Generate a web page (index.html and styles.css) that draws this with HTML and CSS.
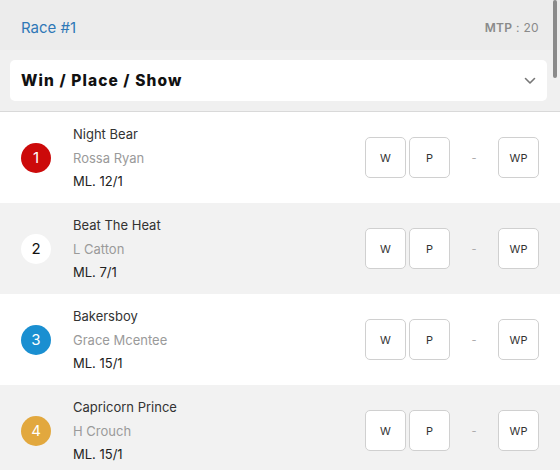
FILE: index.html
```html
<!DOCTYPE html>
<html lang="en">
<head>
    <meta charset="UTF-8">
    <meta name="viewport" content="width=device-width, initial-scale=1.0">
    <title>Race #1</title>
    <link rel="stylesheet" href="styles.css">
</head>
<body>
    <!-- Race header -->
    <div class="race-header">
        <span class="race-title">Race #1</span>
        <span class="mtp"><b>MTP</b> : 20</span>
    </div>

    <!-- Bet type dropdown -->
    <div class="bet-wrap">
        <div class="bet-select">
            <span>Win / Place / Show</span>
            <svg class="chevron" width="12" height="8" viewBox="0 0 12 8">
                <path d="M1.5 1.5 L6 6 L10.5 1.5" fill="none" stroke="#777" stroke-width="1.6" stroke-linecap="round" stroke-linejoin="round"/>
            </svg>
        </div>
    </div>

    <!-- Runners -->
    <div class="runners">
        <div class="runner">
            <div class="num num-red">1</div>
            <div class="info">
                <div class="horse">Night Bear</div>
                <div class="jockey">Rossa Ryan</div>
                <div class="odds">ML. 12/1</div>
            </div>
            <div class="bets">
                <button class="bet">W</button>
                <button class="bet">P</button>
                <span class="dash">-</span>
                <button class="bet">WP</button>
            </div>
        </div>
        <div class="runner">
            <div class="num num-white">2</div>
            <div class="info">
                <div class="horse">Beat The Heat</div>
                <div class="jockey">L Catton</div>
                <div class="odds">ML. 7/1</div>
            </div>
            <div class="bets">
                <button class="bet">W</button>
                <button class="bet">P</button>
                <span class="dash">-</span>
                <button class="bet">WP</button>
            </div>
        </div>
        <div class="runner">
            <div class="num num-blue">3</div>
            <div class="info">
                <div class="horse">Bakersboy</div>
                <div class="jockey">Grace Mcentee</div>
                <div class="odds">ML. 15/1</div>
            </div>
            <div class="bets">
                <button class="bet">W</button>
                <button class="bet">P</button>
                <span class="dash">-</span>
                <button class="bet">WP</button>
            </div>
        </div>
        <div class="runner">
            <div class="num num-gold">4</div>
            <div class="info">
                <div class="horse">Capricorn Prince</div>
                <div class="jockey">H Crouch</div>
                <div class="odds">ML. 15/1</div>
            </div>
            <div class="bets">
                <button class="bet">W</button>
                <button class="bet">P</button>
                <span class="dash">-</span>
                <button class="bet">WP</button>
            </div>
        </div>
    </div>

    <div class="scrollbar"></div>
</body>
</html>
```

FILE: styles.css
```css
/* Reset */
* {
    margin: 0;
    padding: 0;
    box-sizing: border-box;
    font-family: Inter, "Noto Sans", sans-serif;
}

body {
    background-color: #f0f0f0;
    color: #333;
    overflow: hidden;
}

/* Header */
.race-header {
    height: 50px;
    display: flex;
    justify-content: space-between;
    align-items: center;
    padding: 4px 21px 0 21px;
    background-color: #ececec;
}

.race-title {
    color: #2f78b7;
    font-size: 15px;
}

.mtp {
    color: #8a8a8a;
    font-size: 12px;
    letter-spacing: 0.3px;
}

.mtp b {
    font-weight: 600;
}

/* Dropdown */
.bet-wrap {
    padding: 10px 13px 10px 10px;
    border-bottom: 1px solid #d9d9d9;
}

.bet-select {
    height: 41px;
    background-color: #fff;
    border-radius: 5px;
    display: flex;
    justify-content: space-between;
    align-items: center;
    padding: 0 11px;
    font-weight: 800;
    font-size: 15.5px;
    letter-spacing: 1.1px;
    color: #111;
}

/* Runners */
.runner {
    height: 91px;
    display: flex;
    align-items: center;
    padding: 0 21px;
    background-color: #fff;
}

.runner:nth-child(even) {
    background-color: #f2f2f2;
}

.num {
    width: 30px;
    height: 30px;
    border-radius: 50%;
    display: flex;
    justify-content: center;
    align-items: center;
    font-size: 15px;
    color: #fff;
    margin-right: 22px;
    flex-shrink: 0;
}

.num-red { background-color: #cc0a0a; }
.num-white { background-color: #fff; color: #111; }
.num-blue { background-color: #1a8fd1; }
.num-gold { background-color: #e2a83e; }

.info {
    flex: 1;
    font-size: 13px;
    line-height: 23.5px;
    padding-top: 2px;
}

.horse { color: #333; }
.jockey { color: #9a9a9a; }
.odds { color: #222; }

.bets {
    display: flex;
    align-items: center;
}

.bet {
    width: 41px;
    height: 41px;
    background-color: #fff;
    border: 1px solid #d0d0d0;
    border-radius: 5px;
    font-size: 11px;
    color: #333;
    margin-right: 3px;
}

.bet:last-child {
    margin-right: 0;
}

.dash {
    width: 42px;
    text-align: center;
    color: #aaa;
    font-size: 11px;
    margin-right: 3px;
}

/* Fake scrollbar */
.scrollbar {
    position: absolute;
    top: 0;
    right: 3px;
    width: 4px;
    height: 78px;
    border-radius: 2px;
    background-color: #8a8a8a;
}
```
